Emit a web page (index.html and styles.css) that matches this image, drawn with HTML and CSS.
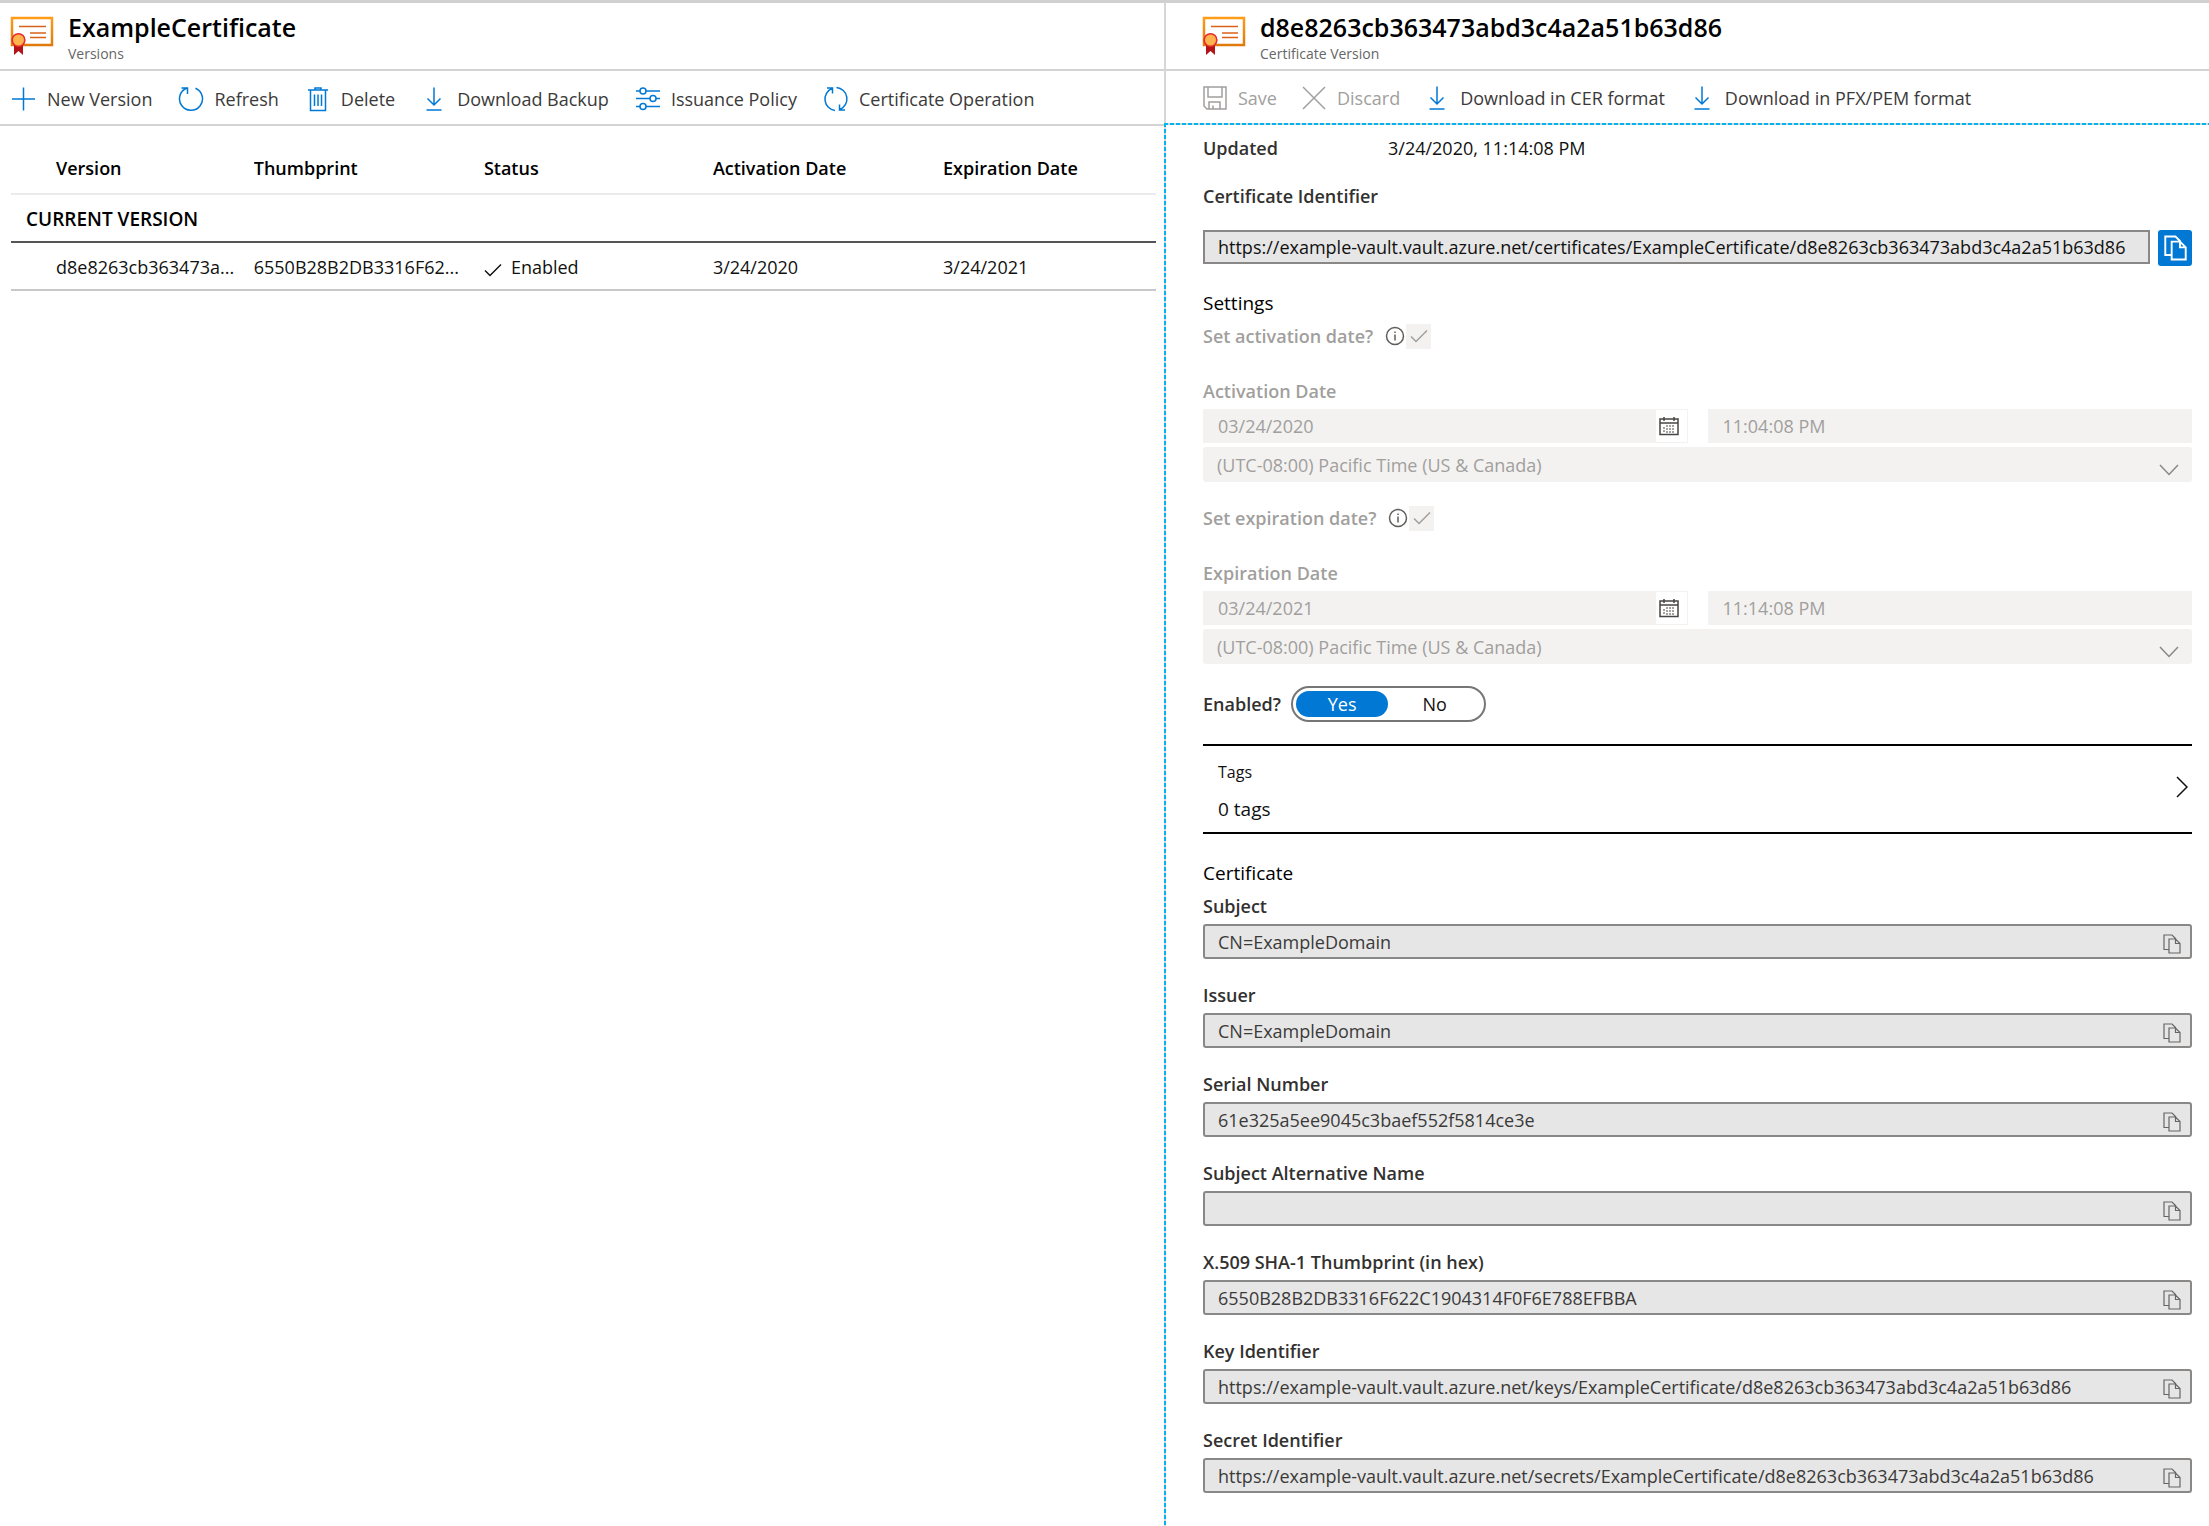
FILE: index.html
```
<!DOCTYPE html>
<html lang="en">
<head>
  <meta charset="UTF-8" />
  <meta name="viewport" content="width=device-width, initial-scale=1" />
  <title>ExampleCertificate - Versions</title>
  <link rel="stylesheet" href="styles.css">
</head>
<body>
  <!-- shared icons -->
  <svg class="sprite" width="0" height="0" aria-hidden="true">
    <defs>
      <linearGradient id="frame" x1="0" y1="0" x2="0" y2="1">
        <stop offset="0" stop-color="#ff9c1a" />
        <stop offset="1" stop-color="#e07a0c" />
      </linearGradient>
    </defs>
    <symbol id="i-cert" viewBox="0 0 44 42">
      <rect x="2" y="4" width="40" height="27" fill="#fff" stroke="url(#frame)" stroke-width="2.500" />
      <path d="M9 12.500H36M20 19H36M20 23.500H36" fill="none" stroke="#d9621a" stroke-width="1.400" />
      <path d="M4 30h9v11l-4.500-4L4 41z" fill="#b31217" />
      <circle cx="8.500" cy="26" r="6.300" fill="#ffb34d" stroke="#e62b2b" stroke-width="1.600" />
    </symbol>
    <symbol id="i-plus" viewBox="0 0 26 26">
      <path d="M1 13H24M12.500 1.500V24.500" />
    </symbol>
    <symbol id="i-refresh" viewBox="0 0 26 26">
      <path d="M9 2A11.500 11.500 0 1 0 17.500 2.200M3.500 2H9.500V8" />
    </symbol>
    <symbol id="i-trash" viewBox="0 0 26 26">
      <path d="M3 4H23M5.500 4V24.500H20.500V4M10 4V2H16V4M9.500 8.500V20M13 8.500V20M16.500 8.500V20" />
    </symbol>
    <symbol id="i-down" viewBox="0 0 26 26">
      <path d="M13 1.500V19M6.500 12.500L13 19L19.500 12.500M5.500 24H20.500" />
    </symbol>
    <symbol id="i-sliders" viewBox="0 0 26 26">
      <path d="M1 5H5M11 5H25M1 12.500H15M21 12.500H25M1 20.500H5M11 20.500H25" />
      <circle cx="8" cy="5" r="3" /><circle cx="18" cy="12.500" r="3" /><circle cx="8" cy="20.500" r="3" />
    </symbol>
    <symbol id="i-cycle" viewBox="0 0 26 26">
      <path d="M9 2.500A11.500 11.500 0 0 0 12 24.500M4 2H9.500V7.500M13.500 1.500A11.500 11.500 0 0 1 17 23.500M22 24H16.500V18.500" />
    </symbol>
    <symbol id="i-save" viewBox="0 0 26 26">
      <path d="M2 2H24V24H5L2 21zM6 2V12H20V2M7 24V17H18V24M11 24V20.500" />
    </symbol>
    <symbol id="i-close" viewBox="0 0 26 26">
      <path d="M2 2L24 24M24 2L2 24" />
    </symbol>
    <symbol id="i-copy" viewBox="0 0 18 20">
      <path d="M6 15.500H1V1H9L13 5M6 5H12.500L17 9.500V19H6zM12.500 5V9.500H17" />
    </symbol>
    <symbol id="i-calendar" viewBox="0 0 20 20">
      <path d="M1 3H19V18.500H1zM1 7H19M5 1V5M15 1V5" />
      <path d="M5 11V17M8 9V17M11 9V17M14 9V17" stroke-dasharray="2 1" stroke-width="1" />
    </symbol>
    <symbol id="i-info" viewBox="0 0 20 20">
      <circle cx="10" cy="10" r="8.500" /><path d="M10 8.500V14.500M10 5.500V7" />
    </symbol>
    <symbol id="i-check" viewBox="0 0 18 14">
      <path d="M1 7.500L6 12.500L17 1.500" />
    </symbol>
    <symbol id="i-chevron-down" viewBox="0 0 20 12">
      <path d="M1 1L10 10.500L19 1" />
    </symbol>
    <symbol id="i-chevron-right" viewBox="0 0 12 22">
      <path d="M1 1L11 11L1 21" />
    </symbol>
  </svg>

  <div class="blades">
    <section class="blade">
      <header class="blade-header">
        <svg class="cert-icon"><use href="#i-cert" /></svg>
        <div>
          <h1 class="title">ExampleCertificate</h1>
          <p class="subtitle">Versions</p>
        </div>
      </header>

      <div class="toolbar">
        <button type="button"><svg class="icon"><use href="#i-plus" /></svg>New Version</button>
        <button type="button"><svg class="icon"><use href="#i-refresh" /></svg>Refresh</button>
        <button type="button"><svg class="icon"><use href="#i-trash" /></svg>Delete</button>
        <button type="button"><svg class="icon"><use href="#i-down" /></svg>Download Backup</button>
        <button type="button"><svg class="icon"><use href="#i-sliders" /></svg>Issuance Policy</button>
        <button type="button"><svg class="icon"><use href="#i-cycle" /></svg>Certificate Operation</button>
      </div>

      <div class="versions">
        <table>
          <thead>
            <tr>
              <th class="col-version">Version</th>
              <th class="col-thumb">Thumbprint</th>
              <th class="col-status">Status</th>
              <th class="col-date">Activation Date</th>
              <th>Expiration Date</th>
            </tr>
          </thead>
          <tbody>
            <tr class="group">
              <th colspan="5">CURRENT VERSION</th>
            </tr>
            <tr class="row">
              <td title="d8e8263cb363473abd3c4a2a51b63d86">d8e8263cb363473a...</td>
              <td title="6550B28B2DB3316F622C1904314F0F6E788EFBBA">6550B28B2DB3316F62...</td>
              <td><svg class="status-icon"><use href="#i-check" /></svg>Enabled</td>
              <td>3/24/2020</td>
              <td>3/24/2021</td>
            </tr>
          </tbody>
        </table>
      </div>
    </section>

    <section class="blade blade-detail">
      <header class="blade-header">
        <svg class="cert-icon"><use href="#i-cert" /></svg>
        <div>
          <h2 class="title">d8e8263cb363473abd3c4a2a51b63d86</h2>
          <p class="subtitle">Certificate Version</p>
        </div>
      </header>

      <div class="toolbar">
        <button type="button" disabled><svg class="icon"><use href="#i-save" /></svg>Save</button>
        <button type="button" disabled><svg class="icon"><use href="#i-close" /></svg>Discard</button>
        <button type="button"><svg class="icon"><use href="#i-down" /></svg>Download in CER format</button>
        <button type="button"><svg class="icon"><use href="#i-down" /></svg>Download in PFX/PEM format</button>
      </div>

      <form class="detail">
        <div class="updated">
          <span class="label">Updated</span>
          <span>3/24/2020, 11:14:08 PM</span>
        </div>

        <label class="label id-label" for="cert-id">Certificate Identifier</label>
        <div class="id-row">
          <input class="id-input" id="cert-id" type="text" readonly value="https://example-vault.vault.azure.net/certificates/ExampleCertificate/d8e8263cb363473abd3c4a2a51b63d86">
          <button class="copy-main" type="button" aria-label="Copy"><svg><use href="#i-copy" /></svg></button>
        </div>

        <h3 class="section">Settings</h3>

        <div class="date-group">
          <div class="check-row">
            <label class="label" for="set-activation">Set activation date?</label>
            <svg class="info"><use href="#i-info" /></svg>
            <span class="check"><input id="set-activation" type="checkbox" checked disabled><svg><use href="#i-check" /></svg></span>
          </div>
          <label class="label" for="activation-date">Activation Date</label>
          <div class="date-row">
            <div class="date-box">
              <input id="activation-date" type="text" value="03/24/2020" disabled>
              <button type="button" aria-label="Pick activation date"><svg><use href="#i-calendar" /></svg></button>
            </div>
            <input class="time" type="text" value="11:04:08 PM" aria-label="Activation time" disabled>
          </div>
          <div class="zone">
            <select aria-label="Activation time zone" disabled>
              <option>(UTC-08:00) Pacific Time (US &amp; Canada)</option>
            </select>
            <svg><use href="#i-chevron-down" /></svg>
          </div>
        </div>

        <div class="date-group">
          <div class="check-row">
            <label class="label" for="set-expiration">Set expiration date?</label>
            <svg class="info"><use href="#i-info" /></svg>
            <span class="check"><input id="set-expiration" type="checkbox" checked disabled><svg><use href="#i-check" /></svg></span>
          </div>
          <label class="label" for="expiration-date">Expiration Date</label>
          <div class="date-row">
            <div class="date-box">
              <input id="expiration-date" type="text" value="03/24/2021" disabled>
              <button type="button" aria-label="Pick expiration date"><svg><use href="#i-calendar" /></svg></button>
            </div>
            <input class="time" type="text" value="11:14:08 PM" aria-label="Expiration time" disabled>
          </div>
          <div class="zone">
            <select aria-label="Expiration time zone" disabled>
              <option>(UTC-08:00) Pacific Time (US &amp; Canada)</option>
            </select>
            <svg><use href="#i-chevron-down" /></svg>
          </div>
        </div>

        <div class="enabled-row">
          <span class="label" id="enabled-label">Enabled?</span>
          <div class="toggle" role="radiogroup" aria-labelledby="enabled-label">
            <label><input type="radio" name="enabled" checked>Yes</label>
            <label><input type="radio" name="enabled">No</label>
          </div>
        </div>

        <button class="tags" type="button">
          <span class="tags-text">
            <span class="tags-name">Tags</span>
            <span class="tags-count">0 tags</span>
          </span>
          <svg><use href="#i-chevron-right" /></svg>
        </button>

        <h3 class="section">Certificate</h3>

        <div class="field">
          <label class="label" for="subject">Subject</label>
          <div class="copy-box">
            <input id="subject" type="text" readonly value="CN=ExampleDomain">
            <button type="button" aria-label="Copy subject"><svg><use href="#i-copy" /></svg></button>
          </div>
        </div>
        <div class="field">
          <label class="label" for="issuer">Issuer</label>
          <div class="copy-box">
            <input id="issuer" type="text" readonly value="CN=ExampleDomain">
            <button type="button" aria-label="Copy issuer"><svg><use href="#i-copy" /></svg></button>
          </div>
        </div>
        <div class="field">
          <label class="label" for="serial">Serial Number</label>
          <div class="copy-box">
            <input id="serial" type="text" readonly value="61e325a5ee9045c3baef552f5814ce3e">
            <button type="button" aria-label="Copy serial number"><svg><use href="#i-copy" /></svg></button>
          </div>
        </div>
        <div class="field">
          <label class="label" for="san">Subject Alternative Name</label>
          <div class="copy-box">
            <input id="san" type="text" readonly value="">
            <button type="button" aria-label="Copy subject alternative name"><svg><use href="#i-copy" /></svg></button>
          </div>
        </div>
        <div class="field">
          <label class="label" for="thumbprint">X.509 SHA-1 Thumbprint (in hex)</label>
          <div class="copy-box">
            <input id="thumbprint" type="text" readonly value="6550B28B2DB3316F622C1904314F0F6E788EFBBA">
            <button type="button" aria-label="Copy thumbprint"><svg><use href="#i-copy" /></svg></button>
          </div>
        </div>
        <div class="field">
          <label class="label" for="key-id">Key Identifier</label>
          <div class="copy-box">
            <input id="key-id" type="text" readonly value="https://example-vault.vault.azure.net/keys/ExampleCertificate/d8e8263cb363473abd3c4a2a51b63d86">
            <button type="button" aria-label="Copy key identifier"><svg><use href="#i-copy" /></svg></button>
          </div>
        </div>
        <div class="field">
          <label class="label" for="secret-id">Secret Identifier</label>
          <div class="copy-box">
            <input id="secret-id" type="text" readonly value="https://example-vault.vault.azure.net/secrets/ExampleCertificate/d8e8263cb363473abd3c4a2a51b63d86">
            <button type="button" aria-label="Copy secret identifier"><svg><use href="#i-copy" /></svg></button>
          </div>
        </div>
      </form>
    </section>
  </div>
</body>
</html>
```
FILE: styles.css
```
* {
  box-sizing: border-box;
}

body {
  margin: 0;
  background: #fff;
  color: #111;
  font-family: "Segoe UI", "Open Sans", "Noto Sans", sans-serif;
  font-size: 18px;
  line-height: 24px;
}

h1, h2, h3, p {
  margin: 0;
}

button, input, select {
  font: inherit;
  color: inherit;
  margin: 0;
}

button {
  padding: 0;
  border: none;
  background: none;
  cursor: pointer;
}

svg {
  display: block;
  flex: none;
  fill: none;
  stroke: currentColor;
  stroke-width: 1.5px;
}

.sprite {
  position: absolute;
}

/* Blades */
.blades {
  display: grid;
  grid-template-columns: minmax(0, 1164fr) minmax(0, 1045fr);
  min-height: 100vh;
  border-top: 3px solid #d0d0d0;
}

.blade {
  display: flex;
  flex-direction: column;
}

.blade-header {
  display: flex;
  gap: 14px;
  height: 68px;
  padding: 9px 10px 0;
  border-bottom: 2px solid #d3d3d3;
}

.cert-icon {
  width: 44px;
  height: 42px;
  margin-top: 2px;
  stroke: none;
}

.title {
  font-size: 25px;
  font-weight: 600;
  line-height: 30px;
  color: #000;
}

.subtitle {
  margin-top: 2px;
  font-size: 14px;
  line-height: 20px;
  color: #666;
}

.toolbar {
  display: flex;
  align-items: center;
  gap: 26px;
  height: 55px;
  padding: 2px 11px 0;
  border-bottom: 2px solid #d3d3d3;
  color: #3b3a39;
}

.toolbar button {
  display: flex;
  align-items: center;
  gap: 10px;
  white-space: nowrap;
}

.toolbar button:disabled {
  color: #a19f9d;
  cursor: default;
}

.icon {
  width: 26px;
  height: 26px;
  color: #0078d4;
}

button:disabled .icon {
  color: #a19f9d;
}

/* Versions list */
.versions {
  padding: 0 8px 0 11px;
}

table {
  width: 100%;
  border-collapse: separate;
  border-spacing: 0;
  table-layout: fixed;
}

th, td {
  padding: 12px 8px 10px 0;
  text-align: left;
  white-space: nowrap;
  overflow: hidden;
  text-overflow: ellipsis;
}

th {
  font-weight: 600;
  color: #000;
}

thead th {
  padding-top: 30px;
  padding-bottom: 13px;
  border-bottom: 2px solid #ebebeb;
}

thead th:first-child,
.row td:first-child {
  padding-left: 45px;
}

.col-version { width: 21.2%; }
.col-thumb { width: 20.1%; }
.col-status { width: 20%; }
.col-date { width: 20.1%; }

.group th {
  padding-left: 15px;
  border-bottom: 2px solid #555;
  font-size: 19px;
}

.row td {
  border-bottom: 2px solid #c8c8c8;
}

.status-icon {
  display: inline-block;
  width: 18px;
  height: 14px;
  margin-right: 9px;
  vertical-align: -3px;
}

/* Detail blade */
.blade-detail {
  border-left: 2px solid #d6d6d6;
  border-bottom: 2px solid #c8c8c8;
}

.blade-detail .blade-header,
.blade-detail .toolbar {
  padding-left: 36px;
}

.blade-detail .toolbar {
  gap: 24px;
  height: 52px;
  border-bottom: none;
}

/* dashed focus outline along the top and left edges */
.detail {
  display: flex;
  flex-direction: column;
  flex: 1;
  margin-left: -2px;
  padding: 13px 17px 30px 39px;
  background:
    repeating-linear-gradient(90deg, #00b4f0 0 4px, #d6d6d6 4px 6px) top / 100% 2px no-repeat,
    repeating-linear-gradient(180deg, #00b4f0 0 4px, #d6d6d6 4px 6px) left / 2px 100% no-repeat;
}

.label {
  font-weight: 600;
  color: #323130;
}

.updated {
  display: grid;
  grid-template-columns: 185px 1fr;
}

.id-label {
  margin: 24px 0 22px;
}

.id-row {
  display: flex;
  gap: 8px;
}

.id-input {
  flex: 1;
  min-width: 0;
  height: 34px;
  padding: 0 13px;
  border: 2px solid #8a8886;
  background: #e6e6e6;
}

.copy-main {
  display: grid;
  place-items: center;
  width: 34px;
  height: 36px;
  border-radius: 3px;
  background: #0078d4;
  color: #fff;
}

.copy-main svg {
  width: 23px;
  height: 26px;
}

.section {
  margin-top: 25px;
  font-size: 19px;
  font-weight: 400;
  color: #000;
}

/* Activation and expiration dates */
.date-group {
  display: flex;
  flex-direction: column;
  margin-top: 8px;
}

.date-group + .date-group {
  margin-top: 23px;
}

.date-group .label,
.date-group input,
.date-group select {
  color: #a19f9d;
  opacity: 1;
}

.check-row {
  display: flex;
  align-items: center;
  height: 26px;
  margin-bottom: 30px;
}

.info {
  width: 20px;
  height: 20px;
  margin: 0 1px 0 12px;
  color: #605e5c;
}

.check {
  display: grid;
  place-items: center;
  width: 25px;
  height: 25px;
  background: #f3f2f1;
  color: #a19f9d;
}

.check > * {
  grid-area: 1 / 1;
}

.check input {
  appearance: none;
  width: 25px;
  height: 25px;
}

.check svg {
  width: 18px;
  height: 14px;
}

.date-row {
  display: grid;
  grid-template-columns: 1fr 1fr;
  gap: 20px;
  margin: 6px 0 4px;
}

.date-box {
  display: flex;
  border: 1px solid #f3f2f1;
}

.date-box input,
.time {
  flex: 1;
  min-width: 0;
  height: 32px;
  padding: 0 14px;
  border: none;
  border-radius: 0;
  background: #f3f2f1;
}

.time {
  height: 34px;
  padding: 0 15px;
}

.date-box button {
  display: grid;
  place-items: center;
  width: 31px;
  padding-right: 4px;
  color: #484644;
}

.date-box svg {
  width: 20px;
  height: 20px;
}

.zone {
  display: grid;
  align-items: center;
}

.zone > * {
  grid-area: 1 / 1;
}

.zone select {
  appearance: none;
  width: 100%;
  height: 35px;
  padding: 0 40px 0 14px;
  border: none;
  border-radius: 3px;
  background: #f3f2f1;
}

.zone svg {
  justify-self: end;
  width: 20px;
  height: 12px;
  margin: 10px 13px 0 0;
  color: #8a8886;
}

/* Enabled switch */
.enabled-row {
  display: flex;
  align-items: center;
  gap: 10px;
  margin-top: 22px;
}

.toggle {
  display: flex;
  width: 195px;
  height: 36px;
  padding: 3px;
  border: 2px solid #767676;
  border-radius: 18px;
}

.toggle label {
  flex: 1;
  border-radius: 14px;
  line-height: 26px;
  text-align: center;
  cursor: pointer;
}

.toggle label:has(:checked) {
  background: #0078d4;
  color: #fff;
}

.toggle input {
  position: absolute;
  opacity: 0;
}

/* Tags */
.tags {
  display: flex;
  align-items: center;
  justify-content: space-between;
  margin-top: 22px;
  padding: 14px 4px 11px 15px;
  border-top: 2px solid #000;
  border-bottom: 2px solid #000;
  text-align: left;
}

.tags-text {
  display: grid;
  gap: 13px;
}

.tags-name {
  font-size: 16px;
}

.tags-count {
  font-size: 19px;
}

.tags svg {
  width: 12px;
  height: 22px;
  margin-bottom: 8px;
}

/* Certificate fields */
.field {
  display: grid;
  gap: 6px;
  margin-bottom: 24px;
}

.tags + .section {
  margin: 27px 0 9px;
}

.copy-box {
  display: flex;
  height: 35px;
  border: 2px solid #8a8886;
  border-radius: 3px;
  background: #e6e6e6;
  color: #3b3a39;
}

.copy-box input {
  flex: 1;
  min-width: 0;
  padding: 0 13px;
  border: none;
  background: none;
}

.copy-box button {
  display: grid;
  place-items: center;
  width: 36px;
  padding-top: 4px;
  color: #666;
}

.copy-box svg {
  width: 18px;
  height: 20px;
  stroke-width: 1.2px;
}
```
